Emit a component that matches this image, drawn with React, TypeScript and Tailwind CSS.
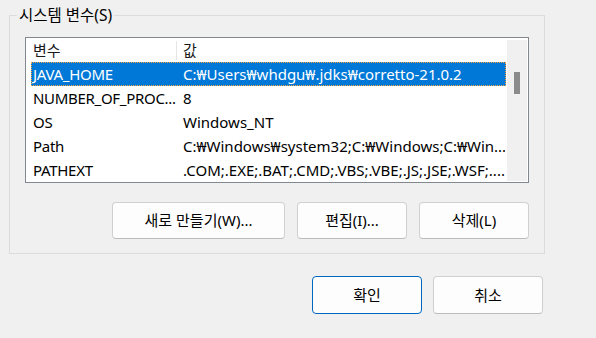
import * as React from "react";

const FONT = { fontFamily: '"Noto Sans", "Noto Sans CJK KR", sans-serif' };

interface EnvRow {
  name: string;
  value: string;
}

const rows: EnvRow[] = [
  { name: "JAVA_HOME", value: "C:₩Users₩whdgu₩.jdks₩corretto-21.0.2" },
  { name: "NUMBER_OF_PROC...", value: "8" },
  { name: "OS", value: "Windows_NT" },
  { name: "Path", value: "C:₩Windows₩system32;C:₩Windows;C:₩Win..." },
  { name: "PATHEXT", value: ".COM;.EXE;.BAT;.CMD;.VBS;.VBE;.JS;.JSE;.WSF;...." },
];

function WinButton({
  label,
  className,
  primary,
}: {
  label: string;
  className?: string;
  primary?: boolean;
}) {
  return (
    <button
      className={
        "flex items-center justify-center rounded-[4px] border bg-[#fdfdfd] text-[15px] text-black " +
        (primary
          ? "border-[#0067c0]"
          : "border-[#d0d0d0] border-b-[#bcbcbc]") +
        " " +
        (className ?? "")
      }
      type="button"
    >
      {label}
    </button>
  );
}

export default function App() {
  return (
    <div
      className="flex h-[338px] w-[596px] flex-col overflow-hidden bg-[#f0f0f0] text-black"
      style={FONT}
    >
      <fieldset className="ml-[9px] mt-[5px] h-[249px] w-[536px] border border-[#dcdcdc]">
        <legend className="ml-[7px] px-[2px] text-[15.5px] leading-[20px]">
          시스템 변수(S)
        </legend>

        <div className="ml-[15px] mt-[12px] flex h-[146px] w-[504px] border border-[#828790] bg-white">
          <div className="flex min-w-0 flex-1 flex-col pl-[5px]">
            <div className="flex h-[28px] items-center text-[15px] text-[#1a1a1a]">
              <div className="w-[145px] pl-[2px]">변수</div>
              <div className="h-[19px] w-px bg-[#e5e5e5]" />
              <div className="pl-[6px]">값</div>
            </div>

            {rows.map((row, index) => {
              const selected = index === 0;
              return (
                <div
                  className={
                    "flex h-[24px] shrink-0 items-center text-[15px] " +
                    (selected
                      ? "border border-dotted border-[#f7a440] bg-[#0078d7] text-white"
                      : "border border-transparent")
                  }
                  key={row.name}
                >
                  <div className="w-[151px] shrink-0 overflow-hidden whitespace-nowrap pl-[1px] tracking-[-0.3px]">
                    {row.name}
                  </div>
                  <div className="min-w-0 flex-1 overflow-hidden whitespace-nowrap">
                    {row.value}
                  </div>
                </div>
              );
            })}
          </div>

          <div className="mb-px ml-[1px] mr-px mt-[2px] flex w-[20px] justify-center bg-[#f0f0f0]">
            <div className="mt-[32px] h-[22px] w-[6px] bg-[#8b8b8b]" />
          </div>
        </div>

        <div className="ml-[102px] mt-[19px] flex gap-[12px]">
          <WinButton className="h-[37px] w-[173px]" label="새로 만들기(W)..." />
          <WinButton className="h-[37px] w-[110px]" label="편집(I)..." />
          <WinButton className="h-[37px] w-[110px]" label="삭제(L)" />
        </div>
      </fieldset>

      <div className="ml-[312px] mt-[22px] flex gap-[11px]">
        <WinButton className="h-[38px] w-[110px]" label="확인" primary />
        <WinButton className="h-[38px] w-[110px]" label="취소" />
      </div>
    </div>
  );
}
